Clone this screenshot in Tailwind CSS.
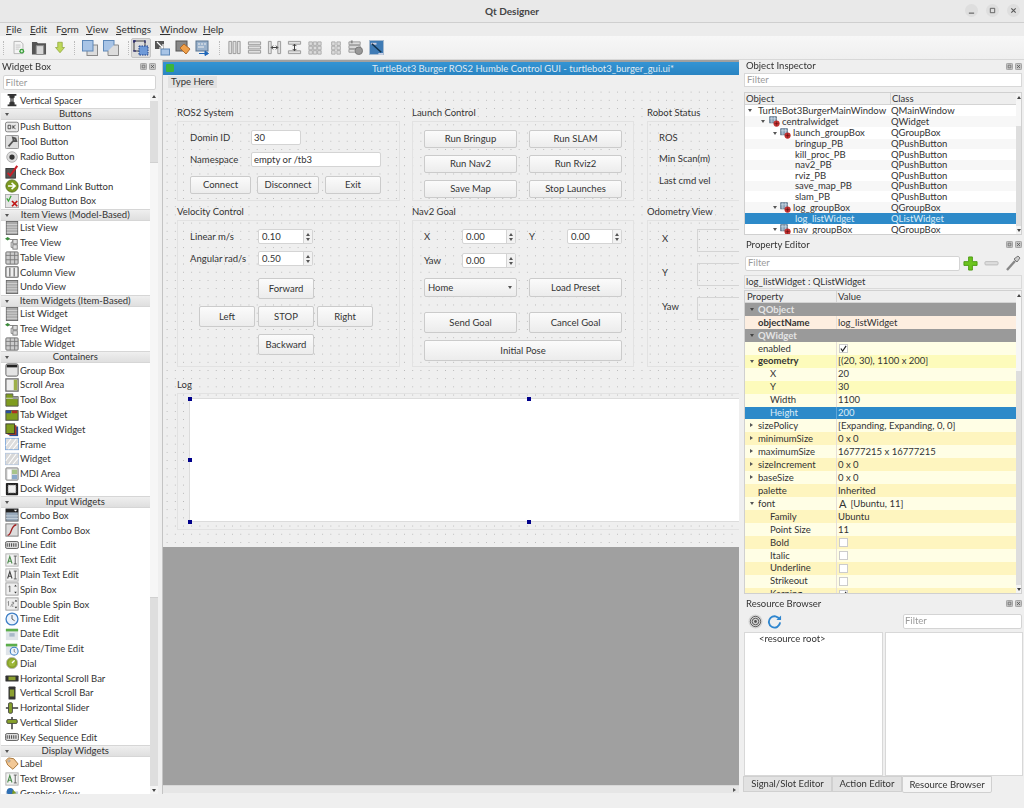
<!DOCTYPE html>
<html lang="en">
<head>
<meta charset="utf-8">
<title>Qt Designer</title>
<script src="https://cdn.jsdelivr.net/npm/@tailwindcss/browser@4"></script>
</head>
<body class="w-[1024px] h-[808px] overflow-hidden bg-[#efefef] font-['Lato','Noto_Sans',sans-serif] text-[9.500px] leading-none text-[#333333] blur-[0.3px]">
<svg class="hidden" xmlns="http://www.w3.org/2000/svg">
<symbol id="d-float" viewBox="0 0 8 8"><rect x=".5" y=".5" width="7" height="7" rx="1" fill="#c4c4c4" stroke="#9a9a9a"/><path d="M2.500 2.500h3v3h-3z" fill="none" stroke="#666" stroke-width=".8"/></symbol>
<symbol id="d-close" viewBox="0 0 8 8"><rect x=".5" y=".5" width="7" height="7" rx="1" fill="#c4c4c4" stroke="#9a9a9a"/><path d="M2.300 2.300l3.400 3.400M5.700 2.300L2.300 5.700" stroke="#555" stroke-width=".9"/></symbol>
<symbol id="spacer" viewBox="0 0 16 16"><path d="M3 1h10v2H3zM3 13h10v2H3zM5 3h6v2.500H5zM5 10.500h6V13H5zM6 5.500h4v5H6z" fill="#333"/><path d="M6 7h4M6 9h4" stroke="#bbb"/></symbol>
<symbol id="push" viewBox="0 0 16 16"><rect x=".5" y="2.500" width="15" height="11" rx="2" fill="#e8e8e8" stroke="#777"/><path d="M3.500 6h3v4h-3zM9 6v4M12 6l-3 2 3 2" fill="none" stroke="#444"/></symbol>
<symbol id="tool" viewBox="0 0 16 16"><rect x=".5" y=".5" width="15" height="15" rx="1" fill="#ddd" stroke="#888"/><path d="M4 13l6-7M9 3l3 1 1 3-3 0z" stroke="#555" stroke-width="2" fill="#999"/></symbol>
<symbol id="radio" viewBox="0 0 16 16"><circle cx="8" cy="8" r="6" fill="#ddd" stroke="#aaa"/><circle cx="8" cy="8" r="3" fill="#333"/></symbol>
<symbol id="check" viewBox="0 0 16 16"><rect x="1" y="4" width="11" height="11" fill="#555" stroke="#333"/><path d="M3 9l3 3 8-11" fill="none" stroke="#c8202a" stroke-width="2.400"/></symbol>
<symbol id="cmd" viewBox="0 0 16 16"><circle cx="8" cy="8" r="7" fill="#7d9a20" stroke="#56701a"/><path d="M3.500 8h7M7.500 4.500l4 3.500-4 3.500" fill="none" stroke="#fff" stroke-width="1.800"/></symbol>
<symbol id="dialog" viewBox="0 0 16 16"><rect x=".5" y=".5" width="15" height="15" fill="#e4e4e4" stroke="#aaa"/><path d="M2 5l2 3 3-6" fill="none" stroke="#3aa63a" stroke-width="1.400"/><path d="M8 8l6 6M14 8l-6 6" stroke="#c01818" stroke-width="2"/></symbol>
<symbol id="list" viewBox="0 0 16 16"><rect x="1.500" y=".5" width="13" height="15" fill="#aaa" stroke="#666"/><path d="M2 4h12M2 7h12M2 10h12M2 13h12" stroke="#d4d4d4"/></symbol>
<symbol id="tree" viewBox="0 0 16 16"><path d="M0 3l3-2 3 2-3 2z" fill="#3b8a3a"/><path d="M5 4h4v3M9 7h-2v6h2" fill="none" stroke="#777"/><rect x="9" y="4" width="5" height="5" fill="#ddd" stroke="#777"/><rect x="9" y="10" width="5" height="5" fill="#ddd" stroke="#777"/></symbol>
<symbol id="table" viewBox="0 0 16 16"><rect x="1" y="1" width="14" height="14" rx="1" fill="#ccc" stroke="#666"/><path d="M1 5h14M1 10h14M6 1v14M11 1v14" stroke="#777"/></symbol>
<symbol id="column" viewBox="0 0 16 16"><rect x="1" y="2" width="14" height="12" rx="1" fill="#eee" stroke="#666" stroke-width="1.400"/><path d="M5.500 3v10M10.500 3v10" stroke="#777" stroke-width="1.500"/></symbol>
<symbol id="group" viewBox="0 0 16 16"><rect x="1" y="1" width="14" height="14" rx="2" fill="#e4e4e4" stroke="#555"/><path d="M2 2h12v3H2z" fill="#222"/></symbol>
<symbol id="scroll" viewBox="0 0 16 16"><rect x="1" y="1" width="14" height="14" fill="#eee" stroke="#666" stroke-width="1.400"/><rect x="10" y="2" width="4" height="12" fill="#9eb04a"/></symbol>
<symbol id="toolbox" viewBox="0 0 16 16"><path d="M1 1h8v3h6v11H1z" fill="#7f9c1f" stroke="#555"/><path d="M9 4h6v3H9z" fill="#999"/><path d="M1 6h8" stroke="#ddd"/></symbol>
<symbol id="tab" viewBox="0 0 16 16"><rect x="1" y="3" width="14" height="11" fill="#7f9c1f" stroke="#444"/><path d="M1 3h6v3H1z" fill="#2a4f9c"/><path d="M8 3h6v3H8z" fill="#b03020"/></symbol>
<symbol id="stacked" viewBox="0 0 16 16"><rect x="5" y="4" width="10" height="11" fill="#2a4f9c"/><rect x="3" y="2.500" width="10" height="11" fill="#b03a20"/><rect x="1" y="1" width="10" height="11" fill="#7f9c1f" stroke="#333"/></symbol>
<symbol id="frame" viewBox="0 0 16 16"><rect x=".5" y="1.500" width="15" height="13" fill="#ddd" stroke="#7fa8da"/><path d="M1 10l6-8M4 14l9-12M9 14l6-7" stroke="#fff" stroke-width="1.200"/></symbol>
<symbol id="widget" viewBox="0 0 16 16"><rect x=".5" y="1.500" width="15" height="13" fill="#d8d8d8" stroke="#b6c6dc"/><path d="M1 10l6-8M4 14l9-12M9 14l6-7" stroke="#fff" stroke-width="1.200"/></symbol>
<symbol id="mdi" viewBox="0 0 16 16"><rect x="1" y="1" width="14" height="14" rx="1" fill="#ddd" stroke="#777"/><rect x="8" y="3" width="6" height="5" fill="#a8c48a"/><rect x="8" y="9" width="6" height="5" fill="#8aa9ca"/><rect x="3" y="3" width="4" height="11" fill="#fff"/></symbol>
<symbol id="dock" viewBox="0 0 16 16"><rect x="1" y="1" width="14" height="14" rx="1" fill="#222"/><rect x="3.500" y="3.500" width="9" height="9" fill="#eee" stroke="#888" stroke-dasharray="1 1"/></symbol>
<symbol id="combo" viewBox="0 0 16 16"><rect x="1" y="1" width="14" height="14" fill="#9ab" stroke="#666"/><path d="M1 1h14v4H1z" fill="#222"/><path d="M10 2h4l-2 2z" fill="#fff"/><path d="M1 9h14M1 12h14" stroke="#c8d2dc"/></symbol>
<symbol id="font" viewBox="0 0 16 16"><rect x="1" y="1" width="14" height="14" fill="#ddd" stroke="#777"/><path d="M3 14c5 0 3-11 10-12" fill="none" stroke="#a02020" stroke-width="1.600"/></symbol>
<symbol id="line" viewBox="0 0 16 16"><rect x=".5" y="4" width="15" height="8" rx="2" fill="#ddd" stroke="#555"/><path d="M2.500 6v4M5 6v4M7.500 6v4M10 6v4M12.500 6v4" stroke="#333"/></symbol>
<symbol id="text" viewBox="0 0 16 16"><rect x="1" y="1" width="14" height="14" fill="#f2f2f2" stroke="#aaa"/><path d="M3 12l2.500-8L8 12M4 9.500h3" fill="none" stroke="#4a8a4a" stroke-width="1.200"/><path d="M10 3.500h3.500M11.700 3.500v9M10 12.500h3.500" stroke="#555"/></symbol>
<symbol id="plain" viewBox="0 0 16 16"><rect x="1" y="1" width="14" height="14" fill="#f2f2f2" stroke="#aaa"/><path d="M3 12l2.500-8L8 12M4 9.500h3" fill="none" stroke="#444" stroke-width="1.200"/><path d="M10 3.500h3.500M11.700 3.500v9M10 12.500h3.500" stroke="#555"/></symbol>
<symbol id="spin" viewBox="0 0 16 16"><rect x="1" y="1" width="14" height="14" fill="#eee" stroke="#999"/><path d="M4 5.500l1.500-1v7" fill="none" stroke="#555"/><path d="M10.500 5l1.500-2 1.500 2zM10.500 11l1.500 2 1.500-2z" fill="#333"/></symbol>
<symbol id="dspin" viewBox="0 0 16 16"><rect x="1" y="1" width="14" height="14" fill="#eee" stroke="#999"/><path d="M3 6l1-1v5M6 10.500h.8M7.800 6h2v2h-2v2.500h2" fill="none" stroke="#666" stroke-width=".8"/><path d="M11 5l1.500-2 1.500 2zM11 11l1.500 2 1.500-2z" fill="#333"/></symbol>
<symbol id="time" viewBox="0 0 16 16"><circle cx="8" cy="8" r="6.800" fill="#eaf2fb" stroke="#3e7fc6" stroke-width="1.500"/><path d="M8 3.500V8l3 2" fill="none" stroke="#555" stroke-width="1.100"/></symbol>
<symbol id="date" viewBox="0 0 16 16"><rect x="1" y="2" width="14" height="13" fill="#dfe4e8"/><path d="M1 2h14v3H1z" fill="#5cae4a"/><rect x="5" y="7" width="6" height="4" fill="#a8b8c8"/></symbol>
<symbol id="datetime" viewBox="0 0 16 16"><rect x="1" y="2" width="13" height="13" fill="#dfe4e8"/><path d="M1 2h13v3H1z" fill="#5cae4a"/><circle cx="10.500" cy="10.500" r="4.500" fill="#eaf2fb" stroke="#3e7fc6" stroke-width="1.200"/><path d="M10.500 8v3l1.500 1" fill="none" stroke="#555" stroke-width=".8"/></symbol>
<symbol id="dial" viewBox="0 0 16 16"><circle cx="8" cy="8" r="6.500" fill="#87a12a" stroke="#bbb"/><circle cx="8" cy="8" r="4" fill="#9eb83a"/><path d="M8 8l3-3" stroke="#fff" stroke-width="1.600"/></symbol>
<symbol id="hsb" viewBox="0 0 16 16"><rect x=".5" y="5" width="15" height="7" rx="1" fill="#333"/><rect x="4" y="6.500" width="8" height="4" fill="#8ca030"/></symbol>
<symbol id="vsb" viewBox="0 0 16 16"><rect x="4" y=".5" width="8" height="15" rx="1" fill="#333"/><rect x="5.500" y="4" width="5" height="8" fill="#8ca030"/></symbol>
<symbol id="hs" viewBox="0 0 16 16"><path d="M1 8h14" stroke="#555" stroke-width="2"/><rect x="4" y="2" width="4.500" height="12" rx="1.500" fill="#86a02a" stroke="#444"/></symbol>
<symbol id="vs" viewBox="0 0 16 16"><path d="M8 1v14" stroke="#555" stroke-width="2"/><rect x="2" y="4" width="12" height="4.500" rx="1.500" fill="#86a02a" stroke="#444"/></symbol>
<symbol id="label" viewBox="0 0 16 16"><path d="M1 4l3-3 6 1 5 6-6 6-6-5z" fill="#f2c896" stroke="#a06a2a"/><circle cx="4.500" cy="4.500" r="1.200" fill="#fff" stroke="#555" stroke-width=".6"/></symbol>
<symbol id="gfx" viewBox="0 0 16 16"><rect x="1" y="5" width="14" height="10" fill="#b8c8dc"/><circle cx="6" cy="5" r="4" fill="#2f6fb3"/><path d="M9 3l4 4-5 1z" fill="#7f9c1f"/></symbol>
<symbol id="obj" viewBox="0 0 16 16"><rect x="1" y="1" width="10" height="9" fill="#8aa3b8" stroke="#52697d"/><path d="M1 4h10M4 1v9M8 1v9" stroke="#d8e2ea" stroke-width=".8"/><circle cx="11" cy="11" r="4.500" fill="#c03030"/><path d="M8 11h6M11 8v6" stroke="#5a1010" stroke-width=".8"/></symbol>
<symbol id="t-new" viewBox="0 0 16 16"><path d="M2.500 .5h8l3 3v12h-11z" fill="#f4f4f4" stroke="#aaa"/><path d="M4.500 5h6M4.500 7.500h6M4.500 10h4" stroke="#bbb"/><circle cx="12" cy="12.500" r="3" fill="#3aa03a"/><path d="M10.500 12.500h3M12 11v3" stroke="#fff"/></symbol>
<symbol id="t-open" viewBox="0 0 16 16"><path d="M.5 2h5l1.500 1.500h8.500v12H.5z" fill="#555"/><path d="M5 6h8v9.500H5z" fill="#d8d8d8" stroke="#888"/></symbol>
<symbol id="t-save" viewBox="0 0 16 16"><path d="M5 1h6v7h3l-6 7-6-7h3z" fill="#bfd85a" stroke="#8ea63a"/></symbol>
<symbol id="t-fwd" viewBox="0 0 16 16"><rect x="5" y="5" width="10.500" height="10.500" fill="#dcdcdc" stroke="#8a8a8a"/><rect x=".5" y=".5" width="10.500" height="10.500" fill="#a8c4e6" stroke="#5e88b8"/></symbol>
<symbol id="t-back" viewBox="0 0 16 16"><rect x=".5" y=".5" width="10.500" height="10.500" fill="#a8c4e6" stroke="#5e88b8"/><path d="M11 5h4.500v10.500H5V11" fill="#dcdcdc" stroke="#8a8a8a"/></symbol>
<symbol id="t-edit" viewBox="0 0 16 16"><path d="M1 1h11v10H1z" fill="#ddd" stroke="#444"/><rect x="6" y="6" width="9" height="9" fill="#6f9ad8" stroke="#1f3f88" stroke-dasharray="1.500 1"/><path d="M1 0v3M0 1h3M12 0v3M0 11h3" stroke="#1a1a6a"/></symbol>
<symbol id="t-sig" viewBox="0 0 16 16"><rect x="1" y="1" width="9" height="8" fill="#555"/><rect x="7" y="9" width="8.500" height="6" fill="#a8c4e6" stroke="#5e88b8"/><path d="M3 2l6 6M9 4v4H5" stroke="#fff" fill="none" stroke-width="1.200"/></symbol>
<symbol id="t-bud" viewBox="0 0 16 16"><rect x="1" y="1" width="11" height="10" fill="#888" stroke="#555"/><path d="M5 8l4-4 6 5-4 5z" fill="#efa04a" stroke="#b06a2a"/></symbol>
<symbol id="t-tab" viewBox="0 0 16 16"><rect x="1" y="1" width="12" height="10" fill="#9ab2cc" stroke="#5a7590"/><path d="M3 4h2M6 4h2M9 4h2M3 7h6" stroke="#f0f0f0"/><path d="M4 13.500h8M10 11l3.500 2.500L10 15.500z" stroke="#1f66b8" fill="#1f66b8"/></symbol>
<symbol id="l-h" viewBox="0 0 16 16"><path d="M2 1.500h3v13H2zM6.500 1.500h3v13h-3zM11 1.500h3v13h-3z" fill="#e0e0e0" stroke="#999"/></symbol>
<symbol id="l-v" viewBox="0 0 16 16"><path d="M1.500 2h13v3h-13zM1.500 6.500h13v3h-13zM1.500 11h13v3h-13z" fill="#e0e0e0" stroke="#999"/></symbol>
<symbol id="l-sh" viewBox="0 0 16 16"><path d="M1.500 1.500h3v13h-3zM11.500 1.500h3v13h-3z" fill="#e0e0e0" stroke="#999"/><path d="M5 8h6M6.500 6l-2 2 2 2M9.500 6l2 2-2 2" fill="none" stroke="#333"/></symbol>
<symbol id="l-sv" viewBox="0 0 16 16"><path d="M1.500 1.500h13v3h-13zM1.500 11.500h13v3h-13z" fill="#e0e0e0" stroke="#999"/><path d="M8 5v6M6 6.500l2-2 2 2M6 9.500l2 2 2-2" fill="none" stroke="#333"/></symbol>
<symbol id="l-g" viewBox="0 0 16 16"><path d="M1 1h4v4H1zM6 1h4v4H6zM11 1h4v4h-4zM1 6h4v4H1zM6 6h4v4H6zM11 6h4v4h-4zM1 11h4v4H1zM6 11h4v4H6zM11 11h4v4h-4z" fill="#dcdcdc" stroke="#a8a8a8"/></symbol>
<symbol id="l-f" viewBox="0 0 16 16"><path d="M3 1h4v4H3zM9 1h4v4H9zM3 6h4v4H3zM9 6h4v4H9zM3 11h4v4H3zM9 11h4v4H9z" fill="#dcdcdc" stroke="#a8a8a8"/></symbol>
<symbol id="l-b" viewBox="0 0 16 16"><path d="M1 2h12v3H1zM1 6h12v3H1zM1 10h12v3H1z" fill="#ddd" stroke="#999"/><path d="M4 .5v3" stroke="#888" stroke-width="2"/><circle cx="11.500" cy="11.500" r="4" fill="#999" stroke="#777"/></symbol>
<symbol id="l-a" viewBox="0 0 16 16"><rect x=".5" y=".5" width="15" height="15" fill="#3f7bb5" stroke="#a8bcd0"/><path d="M2 3h6v2H2z" fill="#ccd"/><path d="M3 4l10 9" stroke="#10304a" stroke-width="1.600"/><path d="M10 14h5v1.500h-5z" fill="#dde"/></symbol>
</svg>

<!-- title bar -->
<header class="relative h-[23px] flex items-center justify-center bg-[#e9e9e9] border-b border-[#cfcfcf]">
  <span class="font-bold text-[10px] text-[#444]">Qt Designer</span>
  <div class="absolute right-[4px] top-[4px] flex gap-[8px]">
    <span class="w-[13px] h-[13px] rounded-full bg-[#dedede] flex items-center justify-center"><svg class="w-[7px] h-[7px]" viewBox="0 0 8 8"><path d="M1 7h6" stroke="#555" stroke-width="1.200"/></svg></span>
    <span class="w-[13px] h-[13px] rounded-full bg-[#dedede] flex items-center justify-center"><svg class="w-[7px] h-[7px]" viewBox="0 0 8 8"><path d="M1.500 1.500h5v5h-5z" fill="none" stroke="#555"/></svg></span>
    <span class="w-[13px] h-[13px] rounded-full bg-[#dedede] flex items-center justify-center"><svg class="w-[7px] h-[7px]" viewBox="0 0 8 8"><path d="M1.500 1.500l5 5M6.500 1.500l-5 5" stroke="#555" stroke-width="1.200"/></svg></span>
  </div>
</header>

<!-- menu -->
<nav class="h-[13px] flex items-center bg-[#ececec] pl-[6px] pb-[1px] text-[10px]">
  <span class="w-[24px]"><u>F</u>ile</span>
  <span class="w-[26px]"><u>E</u>dit</span>
  <span class="w-[30px]">F<u>o</u>rm</span>
  <span class="w-[30px]"><u>V</u>iew</span>
  <span class="w-[44px]"><u>S</u>ettings</span>
  <span class="w-[43px]"><u>W</u>indow</span>
  <span><u>H</u>elp</span>
</nav>

<!-- toolbar -->
<div class="h-[24px] flex items-center bg-linear-to-b from-[#f7f7f7] to-[#efefef] border-b border-[#d8d8d8] pl-[3px]">
  <span class="w-[2px] h-[14px] border-l border-dotted border-[#bbb] mr-[7px]"></span>
  <svg class="w-[13px] h-[15px] mr-[6px]"><use href="#t-new"/></svg>
  <svg class="w-[16px] h-[15px] mr-[7px]"><use href="#t-open"/></svg>
  <svg class="w-[12px] h-[15px] mr-[8px]"><use href="#t-save"/></svg>
  <span class="w-[2px] h-[14px] border-l border-dotted border-[#bbb] mr-[6px]"></span>
  <svg class="w-[16px] h-[16px] mr-[5px]"><use href="#t-fwd"/></svg>
  <svg class="w-[16px] h-[16px] mr-[9px]"><use href="#t-back"/></svg>
  <span class="w-[2px] h-[14px] border-l border-dotted border-[#bbb] mr-[1px]"></span>
  <span class="w-[20px] h-[20px] flex items-center justify-center rounded-[2px] bg-[#dcdcdc] border border-[#c4c4c4] mr-[3px]"><svg class="w-[16px] h-[16px]"><use href="#t-edit"/></svg></span>
  <svg class="w-[16px] h-[16px] mr-[5px]"><use href="#t-sig"/></svg>
  <svg class="w-[16px] h-[16px] mr-[4px]"><use href="#t-bud"/></svg>
  <svg class="w-[16px] h-[16px] mr-[8px]"><use href="#t-tab"/></svg>
  <span class="w-[2px] h-[14px] border-l border-dotted border-[#bbb] mr-[6px]"></span>
  <svg class="w-[15px] h-[15px] mr-[5px]"><use href="#l-h"/></svg>
  <svg class="w-[15px] h-[15px] mr-[5px]"><use href="#l-v"/></svg>
  <svg class="w-[15px] h-[15px] mr-[5px]"><use href="#l-sh"/></svg>
  <svg class="w-[15px] h-[15px] mr-[6px]"><use href="#l-sv"/></svg>
  <svg class="w-[14px] h-[14px] mr-[7px]"><use href="#l-g"/></svg>
  <svg class="w-[14px] h-[14px] mr-[5px]"><use href="#l-f"/></svg>
  <svg class="w-[15px] h-[15px] mr-[6px]"><use href="#l-b"/></svg>
  <svg class="w-[15px] h-[15px]"><use href="#l-a"/></svg>
</div>

<main class="h-[734px] flex">
  <!-- Widget box -->
  <aside class="w-[158px] shrink-0 flex flex-col">
    <div class="h-[14px] flex items-center justify-between pl-[2px] pr-[2px] pb-[1px]">
      <span>Widget Box</span>
      <span class="flex gap-[2px]"><svg class="w-[7px] h-[7px]"><use href="#d-float"/></svg><svg class="w-[7px] h-[7px]"><use href="#d-close"/></svg></span>
    </div>
    <div class="h-[15px] mt-[1px] mx-[2.500px] w-[153px] bg-white border border-[#d4d4d4] rounded-[2px] flex items-center pl-[2px] text-[#9a9a9a]">Filter</div>
    <div class="mt-[3px] flex h-[702px] overflow-hidden">
      <div class="w-[149.500px] ml-[.5px] bg-white overflow-hidden">
        <div class="h-[14.800px] flex items-center gap-[1.500px] pl-[4px]"><svg class="w-[14px] h-[14px]"><use href="#spacer"/></svg><span>Vertical Spacer</span></div>
        <div class="relative h-[12px] flex items-center justify-center bg-linear-to-b from-[#efefef] to-[#dfdfdf] border-y border-[#d6d6d6]"><span class="absolute left-[4px] top-[4px] w-0 h-0 border-x-[2.500px] border-x-transparent border-t-[3px] border-t-[#555]"></span>Buttons</div>
        <div class="h-[14.800px] flex items-center gap-[1.500px] pl-[4px]"><svg class="w-[14px] h-[14px]"><use href="#push"/></svg><span>Push Button</span></div>
        <div class="h-[14.800px] flex items-center gap-[1.500px] pl-[4px]"><svg class="w-[14px] h-[14px]"><use href="#tool"/></svg><span>Tool Button</span></div>
        <div class="h-[14.800px] flex items-center gap-[1.500px] pl-[4px]"><svg class="w-[14px] h-[14px]"><use href="#radio"/></svg><span>Radio Button</span></div>
        <div class="h-[14.800px] flex items-center gap-[1.500px] pl-[4px]"><svg class="w-[14px] h-[14px]"><use href="#check"/></svg><span>Check Box</span></div>
        <div class="h-[14.800px] flex items-center gap-[1.500px] pl-[4px]"><svg class="w-[14px] h-[14px]"><use href="#cmd"/></svg><span>Command Link Button</span></div>
        <div class="h-[14.800px] flex items-center gap-[1.500px] pl-[4px]"><svg class="w-[14px] h-[14px]"><use href="#dialog"/></svg><span>Dialog Button Box</span></div>
        <div class="relative h-[12px] flex items-center justify-center bg-linear-to-b from-[#efefef] to-[#dfdfdf] border-y border-[#d6d6d6]"><span class="absolute left-[4px] top-[4px] w-0 h-0 border-x-[2.500px] border-x-transparent border-t-[3px] border-t-[#555]"></span>Item Views (Model-Based)</div>
        <div class="h-[14.800px] flex items-center gap-[1.500px] pl-[4px]"><svg class="w-[14px] h-[14px]"><use href="#list"/></svg><span>List View</span></div>
        <div class="h-[14.800px] flex items-center gap-[1.500px] pl-[4px]"><svg class="w-[14px] h-[14px]"><use href="#tree"/></svg><span>Tree View</span></div>
        <div class="h-[14.800px] flex items-center gap-[1.500px] pl-[4px]"><svg class="w-[14px] h-[14px]"><use href="#table"/></svg><span>Table View</span></div>
        <div class="h-[14.800px] flex items-center gap-[1.500px] pl-[4px]"><svg class="w-[14px] h-[14px]"><use href="#column"/></svg><span>Column View</span></div>
        <div class="h-[14.800px] flex items-center gap-[1.500px] pl-[4px]"><svg class="w-[14px] h-[14px]"><use href="#list"/></svg><span>Undo View</span></div>
        <div class="relative h-[12px] flex items-center justify-center bg-linear-to-b from-[#efefef] to-[#dfdfdf] border-y border-[#d6d6d6]"><span class="absolute left-[4px] top-[4px] w-0 h-0 border-x-[2.500px] border-x-transparent border-t-[3px] border-t-[#555]"></span>Item Widgets (Item-Based)</div>
        <div class="h-[14.800px] flex items-center gap-[1.500px] pl-[4px]"><svg class="w-[14px] h-[14px]"><use href="#list"/></svg><span>List Widget</span></div>
        <div class="h-[14.800px] flex items-center gap-[1.500px] pl-[4px]"><svg class="w-[14px] h-[14px]"><use href="#tree"/></svg><span>Tree Widget</span></div>
        <div class="h-[14.800px] flex items-center gap-[1.500px] pl-[4px]"><svg class="w-[14px] h-[14px]"><use href="#table"/></svg><span>Table Widget</span></div>
        <div class="relative h-[12px] flex items-center justify-center bg-linear-to-b from-[#efefef] to-[#dfdfdf] border-y border-[#d6d6d6]"><span class="absolute left-[4px] top-[4px] w-0 h-0 border-x-[2.500px] border-x-transparent border-t-[3px] border-t-[#555]"></span>Containers</div>
        <div class="h-[14.800px] flex items-center gap-[1.500px] pl-[4px]"><svg class="w-[14px] h-[14px]"><use href="#group"/></svg><span>Group Box</span></div>
        <div class="h-[14.800px] flex items-center gap-[1.500px] pl-[4px]"><svg class="w-[14px] h-[14px]"><use href="#scroll"/></svg><span>Scroll Area</span></div>
        <div class="h-[14.800px] flex items-center gap-[1.500px] pl-[4px]"><svg class="w-[14px] h-[14px]"><use href="#toolbox"/></svg><span>Tool Box</span></div>
        <div class="h-[14.800px] flex items-center gap-[1.500px] pl-[4px]"><svg class="w-[14px] h-[14px]"><use href="#tab"/></svg><span>Tab Widget</span></div>
        <div class="h-[14.800px] flex items-center gap-[1.500px] pl-[4px]"><svg class="w-[14px] h-[14px]"><use href="#stacked"/></svg><span>Stacked Widget</span></div>
        <div class="h-[14.800px] flex items-center gap-[1.500px] pl-[4px]"><svg class="w-[14px] h-[14px]"><use href="#frame"/></svg><span>Frame</span></div>
        <div class="h-[14.800px] flex items-center gap-[1.500px] pl-[4px]"><svg class="w-[14px] h-[14px]"><use href="#widget"/></svg><span>Widget</span></div>
        <div class="h-[14.800px] flex items-center gap-[1.500px] pl-[4px]"><svg class="w-[14px] h-[14px]"><use href="#mdi"/></svg><span>MDI Area</span></div>
        <div class="h-[14.800px] flex items-center gap-[1.500px] pl-[4px]"><svg class="w-[14px] h-[14px]"><use href="#dock"/></svg><span>Dock Widget</span></div>
        <div class="relative h-[12px] flex items-center justify-center bg-linear-to-b from-[#efefef] to-[#dfdfdf] border-y border-[#d6d6d6]"><span class="absolute left-[4px] top-[4px] w-0 h-0 border-x-[2.500px] border-x-transparent border-t-[3px] border-t-[#555]"></span>Input Widgets</div>
        <div class="h-[14.800px] flex items-center gap-[1.500px] pl-[4px]"><svg class="w-[14px] h-[14px]"><use href="#combo"/></svg><span>Combo Box</span></div>
        <div class="h-[14.800px] flex items-center gap-[1.500px] pl-[4px]"><svg class="w-[14px] h-[14px]"><use href="#font"/></svg><span>Font Combo Box</span></div>
        <div class="h-[14.800px] flex items-center gap-[1.500px] pl-[4px]"><svg class="w-[14px] h-[14px]"><use href="#line"/></svg><span>Line Edit</span></div>
        <div class="h-[14.800px] flex items-center gap-[1.500px] pl-[4px]"><svg class="w-[14px] h-[14px]"><use href="#text"/></svg><span>Text Edit</span></div>
        <div class="h-[14.800px] flex items-center gap-[1.500px] pl-[4px]"><svg class="w-[14px] h-[14px]"><use href="#plain"/></svg><span>Plain Text Edit</span></div>
        <div class="h-[14.800px] flex items-center gap-[1.500px] pl-[4px]"><svg class="w-[14px] h-[14px]"><use href="#spin"/></svg><span>Spin Box</span></div>
        <div class="h-[14.800px] flex items-center gap-[1.500px] pl-[4px]"><svg class="w-[14px] h-[14px]"><use href="#dspin"/></svg><span>Double Spin Box</span></div>
        <div class="h-[14.800px] flex items-center gap-[1.500px] pl-[4px]"><svg class="w-[14px] h-[14px]"><use href="#time"/></svg><span>Time Edit</span></div>
        <div class="h-[14.800px] flex items-center gap-[1.500px] pl-[4px]"><svg class="w-[14px] h-[14px]"><use href="#date"/></svg><span>Date Edit</span></div>
        <div class="h-[14.800px] flex items-center gap-[1.500px] pl-[4px]"><svg class="w-[14px] h-[14px]"><use href="#datetime"/></svg><span>Date/Time Edit</span></div>
        <div class="h-[14.800px] flex items-center gap-[1.500px] pl-[4px]"><svg class="w-[14px] h-[14px]"><use href="#dial"/></svg><span>Dial</span></div>
        <div class="h-[14.800px] flex items-center gap-[1.500px] pl-[4px]"><svg class="w-[14px] h-[14px]"><use href="#hsb"/></svg><span>Horizontal Scroll Bar</span></div>
        <div class="h-[14.800px] flex items-center gap-[1.500px] pl-[4px]"><svg class="w-[14px] h-[14px]"><use href="#vsb"/></svg><span>Vertical Scroll Bar</span></div>
        <div class="h-[14.800px] flex items-center gap-[1.500px] pl-[4px]"><svg class="w-[14px] h-[14px]"><use href="#hs"/></svg><span>Horizontal Slider</span></div>
        <div class="h-[14.800px] flex items-center gap-[1.500px] pl-[4px]"><svg class="w-[14px] h-[14px]"><use href="#vs"/></svg><span>Vertical Slider</span></div>
        <div class="h-[14.800px] flex items-center gap-[1.500px] pl-[4px]"><svg class="w-[14px] h-[14px]"><use href="#line"/></svg><span>Key Sequence Edit</span></div>
        <div class="relative h-[12px] flex items-center justify-center bg-linear-to-b from-[#efefef] to-[#dfdfdf] border-y border-[#d6d6d6]"><span class="absolute left-[4px] top-[4px] w-0 h-0 border-x-[2.500px] border-x-transparent border-t-[3px] border-t-[#555]"></span>Display Widgets</div>
        <div class="h-[14.800px] flex items-center gap-[1.500px] pl-[4px]"><svg class="w-[14px] h-[14px]"><use href="#label"/></svg><span>Label</span></div>
        <div class="h-[14.800px] flex items-center gap-[1.500px] pl-[4px]"><svg class="w-[14px] h-[14px]"><use href="#text"/></svg><span>Text Browser</span></div>
        <div class="h-[14.800px] flex items-center gap-[1.500px] pl-[4px]"><svg class="w-[14px] h-[14px]"><use href="#gfx"/></svg><span>Graphics View</span></div>
      </div>
      <div class="w-[8px] flex flex-col bg-[#dedede]">
        <div class="h-[8px] flex items-center justify-center bg-[#f4f4f4]"><span class="w-0 h-0 border-x-[2.500px] border-x-transparent border-b-[3px] border-b-[#444]"></span></div>
        <div class="h-[61px]"></div>
        <div class="h-[436px] bg-[#f6f6f6] border-y border-[#d0d0d0]"></div>
        <div class="flex-1"></div>
        <div class="h-[8px] flex items-center justify-center bg-[#f4f4f4]"><span class="w-0 h-0 border-x-[2.500px] border-x-transparent border-t-[3px] border-t-[#444]"></span></div>
      </div>
    </div>
  </aside>

  <!-- Centre MDI area -->
  <section class="w-[577px] ml-[4px] shrink-0 flex flex-col border-l border-[#c4c4c4] bg-[#efefef]">
    <div class="h-[725px] pt-[2px] bg-[#a0a0a0] overflow-hidden">
      <div class="h-[485px] w-[720px] bg-[#efefef] flex flex-col overflow-hidden">
        <div class="relative h-[13px] shrink-0 flex items-center justify-center bg-linear-to-b from-[#3494d4] to-[#2a84c2] text-[#dfe9f2]">
          <span class="absolute left-[3px] top-[2px] w-[8px] h-[8px] rounded-[1px] bg-[#3cb43c]"></span>
          <span>TurtleBot3 Burger ROS2 Humble Control GUI - turtlebot3_burger_gui.ui*</span>
        </div>
        <div class="h-[13px] shrink-0 flex items-center pl-[5px]"><span class="bg-[#e2e2e2] px-[3px] h-[12px] flex items-center">Type Here</span></div>
        <div class="flex-1 pl-[14px] bg-[radial-gradient(circle,#b4b4b4_0.5px,transparent_0.8px)] [background-size:8.2px_8.2px] overflow-hidden">
          <div class="w-[700px] grid grid-cols-[223px_222px_200px] gap-x-[12px]">
            <!-- Row 1 -->
            <div class="pt-[20px]">
              <div class="h-[13px]">ROS2 System</div>
              <div class="h-[80px] border border-[#e2e2e2] pl-[12px] pt-[8px] flex flex-col">
                <div class="h-[15px] flex items-center"><span class="w-[61px]">Domin ID</span><span class="w-[50px] h-[15px] flex items-center pl-[2px] bg-white border border-[#d4d4d4] rounded-[2px]">30</span></div>
                <div class="h-[15px] mt-[7px] flex items-center"><span class="w-[61px]">Namespace</span><span class="w-[130px] h-[15px] flex items-center pl-[2px] bg-white border border-[#d4d4d4] rounded-[2px]">empty or /tb3</span></div>
                <div class="h-[18px] mt-[9px] flex gap-[6px]">
                  <span class="w-[61px] flex items-center justify-center rounded-[2px] border border-[#cbcbcb] bg-linear-to-b from-[#fbfbfb] to-[#ececec]">Connect</span>
                  <span class="w-[62px] flex items-center justify-center rounded-[2px] border border-[#cbcbcb] bg-linear-to-b from-[#fbfbfb] to-[#ececec]">Disconnect</span>
                  <span class="w-[56px] flex items-center justify-center rounded-[2px] border border-[#cbcbcb] bg-linear-to-b from-[#fbfbfb] to-[#ececec]">Exit</span>
                </div>
              </div>
            </div>
            <div class="pt-[20px]">
              <div class="h-[13px]">Launch Control</div>
              <div class="h-[80px] border border-[#e2e2e2] pl-[11px] pt-[8px] grid grid-cols-[93px_93px] grid-rows-[18px_18px_18px] gap-x-[12px] gap-y-[7px]">
                <span class="flex items-center justify-center rounded-[2px] border border-[#cbcbcb] bg-linear-to-b from-[#fbfbfb] to-[#ececec]">Run Bringup</span>
                <span class="flex items-center justify-center rounded-[2px] border border-[#cbcbcb] bg-linear-to-b from-[#fbfbfb] to-[#ececec]">Run SLAM</span>
                <span class="flex items-center justify-center rounded-[2px] border border-[#cbcbcb] bg-linear-to-b from-[#fbfbfb] to-[#ececec]">Run Nav2</span>
                <span class="flex items-center justify-center rounded-[2px] border border-[#cbcbcb] bg-linear-to-b from-[#fbfbfb] to-[#ececec]">Run Rviz2</span>
                <span class="flex items-center justify-center rounded-[2px] border border-[#cbcbcb] bg-linear-to-b from-[#fbfbfb] to-[#ececec]">Save Map</span>
                <span class="flex items-center justify-center rounded-[2px] border border-[#cbcbcb] bg-linear-to-b from-[#fbfbfb] to-[#ececec]">Stop Launches</span>
              </div>
            </div>
            <div class="pt-[20px]">
              <div class="h-[13px] ml-[1px]">Robot Status</div>
              <div class="h-[80px] ml-[1px] border border-[#e2e2e2] pl-[11px] pt-[10px] flex flex-col gap-[10.500px]">
                <span class="h-[11px] flex items-center">ROS</span>
                <span class="h-[11px] flex items-center">Min Scan(m)</span>
                <span class="h-[11px] flex items-center">Last cmd vel</span>
              </div>
            </div>
            <!-- Row 2 -->
            <div class="pt-[6px]">
              <div class="h-[13px]">Velocity Control</div>
              <div class="h-[147px] border border-[#e2e2e2] pl-[12px] pt-[8px]">
                <div class="h-[15px] flex items-center"><span class="w-[68px]">Linear m/s</span><span class="w-[55px] h-[15px] flex items-center justify-between pl-[3px] bg-white border border-[#d4d4d4] rounded-[2px]">0.10<span class="w-[9px] h-full flex flex-col items-center justify-center gap-[2px] bg-[#f2f2f2] border-l border-[#d4d4d4]"><span class="w-0 h-0 border-x-[2.500px] border-x-transparent border-b-[3px] border-b-[#555]"></span><span class="w-0 h-0 border-x-[2.500px] border-x-transparent border-t-[3px] border-t-[#555]"></span></span></span></div>
                <div class="h-[15px] mt-[7px] flex items-center"><span class="w-[68px]">Angular rad/s</span><span class="w-[55px] h-[15px] flex items-center justify-between pl-[3px] bg-white border border-[#d4d4d4] rounded-[2px]">0.50<span class="w-[9px] h-full flex flex-col items-center justify-center gap-[2px] bg-[#f2f2f2] border-l border-[#d4d4d4]"><span class="w-0 h-0 border-x-[2.500px] border-x-transparent border-b-[3px] border-b-[#555]"></span><span class="w-0 h-0 border-x-[2.500px] border-x-transparent border-t-[3px] border-t-[#555]"></span></span></span></div>
                <div class="mt-[12px] ml-[9px] grid grid-cols-[56px_56px_56px] grid-rows-[21px_21px_21px] gap-x-[3px] gap-y-[7px]">
                  <span class="col-start-2 flex items-center justify-center rounded-[2px] border border-[#cbcbcb] bg-linear-to-b from-[#fbfbfb] to-[#ececec]">Forward</span>
                  <span class="col-start-1 flex items-center justify-center rounded-[2px] border border-[#cbcbcb] bg-linear-to-b from-[#fbfbfb] to-[#ececec]">Left</span>
                  <span class="flex items-center justify-center rounded-[2px] border border-[#cbcbcb] bg-linear-to-b from-[#fbfbfb] to-[#ececec]">STOP</span>
                  <span class="flex items-center justify-center rounded-[2px] border border-[#cbcbcb] bg-linear-to-b from-[#fbfbfb] to-[#ececec]">Right</span>
                  <span class="col-start-2 flex items-center justify-center rounded-[2px] border border-[#cbcbcb] bg-linear-to-b from-[#fbfbfb] to-[#ececec]">Backward</span>
                </div>
              </div>
            </div>
            <div class="pt-[6px]">
              <div class="h-[13px]">Nav2 Goal</div>
              <div class="h-[147px] border border-[#e2e2e2] pl-[11px] pt-[8px]">
                <div class="h-[15px] flex items-center">
                  <span class="w-[38px]">X</span><span class="w-[54px] h-[15px] flex items-center justify-between pl-[3px] bg-white border border-[#d4d4d4] rounded-[2px]">0.00<span class="w-[9px] h-full flex flex-col items-center justify-center gap-[2px] bg-[#f2f2f2] border-l border-[#d4d4d4]"><span class="w-0 h-0 border-x-[2.500px] border-x-transparent border-b-[3px] border-b-[#555]"></span><span class="w-0 h-0 border-x-[2.500px] border-x-transparent border-t-[3px] border-t-[#555]"></span></span></span>
                  <span class="w-[38px] ml-[13px]">Y</span><span class="w-[55px] h-[15px] flex items-center justify-between pl-[3px] bg-white border border-[#d4d4d4] rounded-[2px]">0.00<span class="w-[9px] h-full flex flex-col items-center justify-center gap-[2px] bg-[#f2f2f2] border-l border-[#d4d4d4]"><span class="w-0 h-0 border-x-[2.500px] border-x-transparent border-b-[3px] border-b-[#555]"></span><span class="w-0 h-0 border-x-[2.500px] border-x-transparent border-t-[3px] border-t-[#555]"></span></span></span>
                </div>
                <div class="h-[15px] mt-[9px] flex items-center"><span class="w-[38px]">Yaw</span><span class="w-[54px] h-[15px] flex items-center justify-between pl-[3px] bg-white border border-[#d4d4d4] rounded-[2px]">0.00<span class="w-[9px] h-full flex flex-col items-center justify-center gap-[2px] bg-[#f2f2f2] border-l border-[#d4d4d4]"><span class="w-0 h-0 border-x-[2.500px] border-x-transparent border-b-[3px] border-b-[#555]"></span><span class="w-0 h-0 border-x-[2.500px] border-x-transparent border-t-[3px] border-t-[#555]"></span></span></span></div>
                <div class="h-[19px] mt-[10px] flex gap-[12px]">
                  <span class="w-[93px] flex items-center justify-between pl-[3px] pr-[4px] rounded-[2px] border border-[#cbcbcb] bg-linear-to-b from-[#fbfbfb] to-[#ececec]">Home<span class="w-0 h-0 border-x-[2.500px] border-x-transparent border-t-[3px] border-t-[#555]"></span></span>
                  <span class="w-[93px] flex items-center justify-center rounded-[2px] border border-[#cbcbcb] bg-linear-to-b from-[#fbfbfb] to-[#ececec]">Load Preset</span>
                </div>
                <div class="h-[21px] mt-[15px] flex gap-[12px]">
                  <span class="w-[93px] flex items-center justify-center rounded-[2px] border border-[#cbcbcb] bg-linear-to-b from-[#fbfbfb] to-[#ececec]">Send Goal</span>
                  <span class="w-[93px] flex items-center justify-center rounded-[2px] border border-[#cbcbcb] bg-linear-to-b from-[#fbfbfb] to-[#ececec]">Cancel Goal</span>
                </div>
                <div class="h-[21px] w-[198px] mt-[7px] flex items-center justify-center rounded-[2px] border border-[#cbcbcb] bg-linear-to-b from-[#fbfbfb] to-[#ececec]">Initial Pose</div>
              </div>
            </div>
            <div class="pt-[6px]">
              <div class="h-[13px] ml-[1px]">Odometry View</div>
              <div class="h-[147px] ml-[1px] border border-[#e2e2e2] pl-[14px] pt-[8px] flex flex-col gap-[11px]">
                <div class="flex items-center h-[23px]"><span class="w-[35px] pb-[4px]">X</span><span class="w-[100px] h-[23px] border border-[#d4d4d4] shrink-0"></span></div>
                <div class="flex items-center h-[23px]"><span class="w-[35px] pb-[4px]">Y</span><span class="w-[100px] h-[23px] border border-[#d4d4d4] shrink-0"></span></div>
                <div class="flex items-center h-[23px]"><span class="w-[35px] pb-[3px]">Yaw</span><span class="w-[100px] h-[23px] border border-[#d4d4d4] shrink-0"></span></div>
              </div>
            </div>
          </div>
          <!-- Log -->
          <div class="mt-[13px]">
            <div class="h-[13px]">Log</div>
            <div class="relative w-[700px] h-[137px] border border-[#e2e2e2] pl-[11px] pt-[4px]">
              <div class="w-[679px] h-[124px] bg-white border border-[#dcdcdc]"></div>
              <span class="absolute left-[10px] top-[2.500px] w-[4px] h-[4px] bg-[#00008b]"></span>
              <span class="absolute left-[349px] top-[2.500px] w-[4px] h-[4px] bg-[#00008b]"></span>
              <span class="absolute left-[10px] top-[64px] w-[4px] h-[4px] bg-[#00008b]"></span>
              <span class="absolute left-[10px] top-[125.500px] w-[4px] h-[4px] bg-[#00008b]"></span>
              <span class="absolute left-[349px] top-[125.500px] w-[4px] h-[4px] bg-[#00008b]"></span>
            </div>
          </div>
        </div>
      </div>
    </div>
    <div class="h-[8px] flex justify-end items-center bg-[#e6e6e6] pr-[3px] border-t border-[#d8d8d8]"><span class="w-0 h-0 border-y-[2.500px] border-y-transparent border-l-[3px] border-l-[#555]"></span></div>
  </section>

  <!-- Right docks -->
  <aside class="w-[281px] ml-[4px] shrink-0 flex flex-col">
    <!-- Object Inspector -->
    <div class="h-[13px] flex items-center justify-between pl-[3px] pr-[2px] pb-[1px]">
      <span>Object Inspector</span>
      <span class="flex gap-[2px]"><svg class="w-[7px] h-[7px]"><use href="#d-float"/></svg><svg class="w-[7px] h-[7px]"><use href="#d-close"/></svg></span>
    </div>
    <div class="h-[14px] ml-[1px] w-[278px] bg-white border border-[#d8d8d8] flex items-center pl-[2px] text-[#9a9a9a]">Filter</div>
    <div class="mt-[5px] ml-[1px] w-[278px] h-[143px] flex bg-white border border-[#d0d0d0] overflow-hidden">
      <div class="w-[271px]">
        <div class="h-[12px] grid grid-cols-[145px_1fr] items-center bg-[#eeeeee] border-b border-[#d4d4d4]"><span class="pl-[1px]">Object</span><span class="pl-[1px] h-full flex items-center border-l border-[#d4d4d4]">Class</span></div>
        <div class="h-[11px] grid grid-cols-[145px_1fr] items-center"><span class="flex items-center pl-[3px]"><span class="w-0 h-0 border-x-[2.500px] border-x-transparent border-t-[3px] border-t-[#555] mr-[6px]"></span>TurtleBot3BurgerMainWindow</span><span class="pl-[1px]">QMainWindow</span></div>
        <div class="h-[11.400px] grid grid-cols-[145px_1fr] items-center bg-[#f7f7f7]"><span class="flex items-center pl-[16px]"><span class="w-0 h-0 border-x-[2.500px] border-x-transparent border-t-[3px] border-t-[#555] mr-[4px]"></span><svg class="w-[11px] h-[11px] mr-[2px]"><use href="#obj"/></svg>centralwidget</span><span class="pl-[1px]">QWidget</span></div>
        <div class="h-[11.400px] grid grid-cols-[145px_1fr] items-center"><span class="flex items-center pl-[28px]"><span class="w-0 h-0 border-x-[2.500px] border-x-transparent border-t-[3px] border-t-[#555] mr-[3px]"></span><svg class="w-[11px] h-[11px] mr-[2px]"><use href="#obj"/></svg>launch_groupBox</span><span class="pl-[1px]">QGroupBox</span></div>
        <div class="h-[10.500px] grid grid-cols-[145px_1fr] items-center bg-[#f7f7f7]"><span class="pl-[50px]">bringup_PB</span><span class="pl-[1px]">QPushButton</span></div>
        <div class="h-[10.500px] grid grid-cols-[145px_1fr] items-center"><span class="pl-[50px]">kill_proc_PB</span><span class="pl-[1px]">QPushButton</span></div>
        <div class="h-[10.500px] grid grid-cols-[145px_1fr] items-center bg-[#f7f7f7]"><span class="pl-[50px]">nav2_PB</span><span class="pl-[1px]">QPushButton</span></div>
        <div class="h-[10.500px] grid grid-cols-[145px_1fr] items-center"><span class="pl-[50px]">rviz_PB</span><span class="pl-[1px]">QPushButton</span></div>
        <div class="h-[10.500px] grid grid-cols-[145px_1fr] items-center bg-[#f7f7f7]"><span class="pl-[50px]">save_map_PB</span><span class="pl-[1px]">QPushButton</span></div>
        <div class="h-[10.500px] grid grid-cols-[145px_1fr] items-center"><span class="pl-[50px]">slam_PB</span><span class="pl-[1px]">QPushButton</span></div>
        <div class="h-[11.400px] grid grid-cols-[145px_1fr] items-center bg-[#f7f7f7]"><span class="flex items-center pl-[28px]"><span class="w-0 h-0 border-x-[2.500px] border-x-transparent border-t-[3px] border-t-[#555] mr-[3px]"></span><svg class="w-[11px] h-[11px] mr-[2px]"><use href="#obj"/></svg>log_groupBox</span><span class="pl-[1px]">QGroupBox</span></div>
        <div class="h-[10.500px] grid grid-cols-[145px_1fr] items-center bg-[#2d8ac9] text-[#dcecf7]"><span class="pl-[50px]">log_listWidget</span><span class="pl-[1px]">QListWidget</span></div>
        <div class="h-[11.400px] grid grid-cols-[145px_1fr] items-center"><span class="flex items-center pl-[28px]"><span class="w-0 h-0 border-x-[2.500px] border-x-transparent border-t-[3px] border-t-[#555] mr-[3px]"></span><svg class="w-[11px] h-[11px] mr-[2px]"><use href="#obj"/></svg>nav_groupBox</span><span class="pl-[1px]">QGroupBox</span></div>
      </div>
      <div class="flex-1 flex flex-col bg-[#dedede]">
        <div class="h-[8px] flex items-center justify-center bg-[#f4f4f4]"><span class="w-0 h-0 border-x-[2.500px] border-x-transparent border-b-[3px] border-b-[#444]"></span></div>
        <div class="h-[25px] bg-[#f6f6f6]"></div>
        <div class="flex-1"></div>
        <div class="h-[8px] flex items-center justify-center bg-[#f4f4f4]"><span class="w-0 h-0 border-x-[2.500px] border-x-transparent border-t-[3px] border-t-[#444]"></span></div>
      </div>
    </div>

    <!-- Property Editor -->
    <div class="h-[14px] mt-[3px] flex items-center justify-between pl-[3px] pr-[2px] pb-[1px]">
      <span>Property Editor</span>
      <span class="flex gap-[2px]"><svg class="w-[7px] h-[7px]"><use href="#d-float"/></svg><svg class="w-[7px] h-[7px]"><use href="#d-close"/></svg></span>
    </div>
    <div class="h-[16px] mt-[3px] flex items-center">
      <span class="ml-[2px] w-[215px] h-[15px] bg-white border border-[#d4d4d4] rounded-[2px] flex items-center pl-[2px] text-[#9a9a9a]">Filter</span>
      <svg class="ml-[3px] w-[15px] h-[15px]" viewBox="0 0 16 16"><path d="M6 1h4v5h5v4h-5v5H6v-5H1V6h5z" fill="#6cc41e" stroke="#4c9a12"/></svg>
      <svg class="ml-[6px] w-[15px] h-[15px]" viewBox="0 0 16 16"><rect x="1" y="6" width="14" height="3.500" rx="1" fill="#ddd" stroke="#bbb"/></svg>
      <svg class="ml-[6px] w-[16px] h-[16px]" viewBox="0 0 16 16"><path d="M2 15L10 6" stroke="#888" stroke-width="2.400"/><path d="M9 4l4-3 2 2-3 4z" fill="#ccc" stroke="#777"/></svg>
    </div>
    <div class="h-[14px] mt-[4px] ml-[1px] w-[278px] flex items-center pl-[1px] bg-[#f0f0f0] border border-[#dadada]">log_listWidget : QListWidget</div>
    <div class="mt-[1px] ml-[1px] w-[278px] h-[304px] flex bg-white border border-[#d0d0d0] overflow-hidden">
      <div class="w-[271px]">
        <div class="h-[12px] grid grid-cols-[91px_1fr] items-center bg-[#eeeeee] border-b border-[#d4d4d4]"><span class="pl-[2px]">Property</span><span class="pl-[1px] h-full flex items-center border-l border-[#d4d4d4]">Value</span></div>
        <div class="relative h-[12.950px] flex items-center bg-[#9a9a9a] pl-[13px] font-bold text-[#e4e4e4]"><span class="absolute left-[5px] top-[5px] w-0 h-0 border-x-[2.500px] border-x-transparent border-t-[3px] border-t-[#444]"></span>QObject</div>
        <div class="h-[12.950px] grid grid-cols-[91px_1fr] items-center bg-[#fdeee0]"><span class="pl-[13px] font-bold">objectName</span><span class="pl-[1px] h-full flex items-center border-l border-[#e6e0d8]">log_listWidget</span></div>
        <div class="relative h-[12.950px] flex items-center bg-[#9a9a9a] pl-[13px] font-bold text-[#e4e4e4]"><span class="absolute left-[5px] top-[5px] w-0 h-0 border-x-[2.500px] border-x-transparent border-t-[3px] border-t-[#444]"></span>QWidget</div>
        <div class="h-[12.950px] grid grid-cols-[91px_1fr] items-center bg-[#fffee5]"><span class="pl-[13px]">enabled</span><span class="pl-[1px] h-full flex items-center border-l border-[#e6e0d8]"><span class="w-[9px] h-[9px] ml-[1px] bg-white border border-[#ccc] flex items-center justify-center"><svg class="w-[7px] h-[7px]" viewBox="0 0 8 8"><path d="M1 4l2 3 4-6" fill="none" stroke="#222" stroke-width="1.300"/></svg></span></span></div>
        <div class="relative h-[12.950px] grid grid-cols-[91px_1fr] items-center bg-[#fdfbbb]"><span class="absolute left-[5px] top-[5px] w-0 h-0 border-x-[2.500px] border-x-transparent border-t-[3px] border-t-[#555]"></span><span class="pl-[13px] font-bold">geometry</span><span class="pl-[1px] h-full flex items-center border-l border-[#e6e0d8]">[(20, 30), 1100 x 200]</span></div>
        <div class="h-[12.950px] grid grid-cols-[91px_1fr] items-center bg-[#fffee5]"><span class="pl-[25px]">X</span><span class="pl-[1px] h-full flex items-center border-l border-[#e6e0d8]">20</span></div>
        <div class="h-[12.950px] grid grid-cols-[91px_1fr] items-center bg-[#fdfbbb]"><span class="pl-[25px]">Y</span><span class="pl-[1px] h-full flex items-center border-l border-[#e6e0d8]">30</span></div>
        <div class="h-[12.950px] grid grid-cols-[91px_1fr] items-center bg-[#fffee5]"><span class="pl-[25px]">Width</span><span class="pl-[1px] h-full flex items-center border-l border-[#e6e0d8]">1100</span></div>
        <div class="h-[12.950px] grid grid-cols-[91px_1fr] items-center bg-[#2d8ac9] text-[#dcecf7]"><span class="pl-[25px]">Height</span><span class="pl-[1px] h-full flex items-center border-l border-[#5ea6d8]">200</span></div>
        <div class="relative h-[12.950px] grid grid-cols-[91px_1fr] items-center bg-[#fffee5]"><span class="absolute left-[5px] top-[4px] w-0 h-0 border-y-[2.500px] border-y-transparent border-l-[3px] border-l-[#555]"></span><span class="pl-[13px]">sizePolicy</span><span class="pl-[1px] h-full flex items-center border-l border-[#e6e0d8]">[Expanding, Expanding, 0, 0]</span></div>
        <div class="relative h-[12.950px] grid grid-cols-[91px_1fr] items-center bg-[#fef5bf]"><span class="absolute left-[5px] top-[4px] w-0 h-0 border-y-[2.500px] border-y-transparent border-l-[3px] border-l-[#555]"></span><span class="pl-[13px]">minimumSize</span><span class="pl-[1px] h-full flex items-center border-l border-[#e6e0d8]">0 x 0</span></div>
        <div class="relative h-[12.950px] grid grid-cols-[91px_1fr] items-center bg-[#fffee5]"><span class="absolute left-[5px] top-[4px] w-0 h-0 border-y-[2.500px] border-y-transparent border-l-[3px] border-l-[#555]"></span><span class="pl-[13px]">maximumSize</span><span class="pl-[1px] h-full flex items-center border-l border-[#e6e0d8]">16777215 x 16777215</span></div>
        <div class="relative h-[12.950px] grid grid-cols-[91px_1fr] items-center bg-[#fef5bf]"><span class="absolute left-[5px] top-[4px] w-0 h-0 border-y-[2.500px] border-y-transparent border-l-[3px] border-l-[#555]"></span><span class="pl-[13px]">sizeIncrement</span><span class="pl-[1px] h-full flex items-center border-l border-[#e6e0d8]">0 x 0</span></div>
        <div class="relative h-[12.950px] grid grid-cols-[91px_1fr] items-center bg-[#fffee5]"><span class="absolute left-[5px] top-[4px] w-0 h-0 border-y-[2.500px] border-y-transparent border-l-[3px] border-l-[#555]"></span><span class="pl-[13px]">baseSize</span><span class="pl-[1px] h-full flex items-center border-l border-[#e6e0d8]">0 x 0</span></div>
        <div class="h-[12.950px] grid grid-cols-[91px_1fr] items-center bg-[#fef5bf]"><span class="pl-[13px]">palette</span><span class="pl-[1px] h-full flex items-center border-l border-[#e6e0d8]">Inherited</span></div>
        <div class="relative h-[12.950px] grid grid-cols-[91px_1fr] items-center bg-[#fffee5]"><span class="absolute left-[5px] top-[5px] w-0 h-0 border-x-[2.500px] border-x-transparent border-t-[3px] border-t-[#555]"></span><span class="pl-[13px]">font</span><span class="pl-[1px] h-full flex items-center gap-[4px] border-l border-[#e6e0d8]"><span class="text-[11px] pl-[1px]">A</span>[Ubuntu, 11]</span></div>
        <div class="h-[12.950px] grid grid-cols-[91px_1fr] items-center bg-[#fef5bf]"><span class="pl-[25px]">Family</span><span class="pl-[1px] h-full flex items-center border-l border-[#e6e0d8]">Ubuntu</span></div>
        <div class="h-[12.950px] grid grid-cols-[91px_1fr] items-center bg-[#fffee5]"><span class="pl-[25px]">Point Size</span><span class="pl-[1px] h-full flex items-center border-l border-[#e6e0d8]">11</span></div>
        <div class="h-[12.950px] grid grid-cols-[91px_1fr] items-center bg-[#fef5bf]"><span class="pl-[25px]">Bold</span><span class="pl-[1px] h-full flex items-center border-l border-[#e6e0d8]"><span class="w-[9px] h-[9px] ml-[1px] bg-white border border-[#ccc]"></span></span></div>
        <div class="h-[12.950px] grid grid-cols-[91px_1fr] items-center bg-[#fffee5]"><span class="pl-[25px]">Italic</span><span class="pl-[1px] h-full flex items-center border-l border-[#e6e0d8]"><span class="w-[9px] h-[9px] ml-[1px] bg-white border border-[#ccc]"></span></span></div>
        <div class="h-[12.950px] grid grid-cols-[91px_1fr] items-center bg-[#fef5bf]"><span class="pl-[25px]">Underline</span><span class="pl-[1px] h-full flex items-center border-l border-[#e6e0d8]"><span class="w-[9px] h-[9px] ml-[1px] bg-white border border-[#ccc]"></span></span></div>
        <div class="h-[12.950px] grid grid-cols-[91px_1fr] items-center bg-[#fffee5]"><span class="pl-[25px]">Strikeout</span><span class="pl-[1px] h-full flex items-center border-l border-[#e6e0d8]"><span class="w-[9px] h-[9px] ml-[1px] bg-white border border-[#ccc]"></span></span></div>
        <div class="h-[12.950px] grid grid-cols-[91px_1fr] items-center bg-[#fef5bf]"><span class="pl-[25px]">Kerning</span><span class="pl-[1px] h-full flex items-center border-l border-[#e6e0d8]"><span class="w-[9px] h-[9px] ml-[1px] bg-white border border-[#ccc] flex items-center justify-center"><svg class="w-[7px] h-[7px]" viewBox="0 0 8 8"><path d="M1 4l2 3 4-6" fill="none" stroke="#222" stroke-width="1.300"/></svg></span></span></div>
      </div>
      <div class="flex-1 flex flex-col bg-[#dedede]">
        <div class="h-[8px] flex items-center justify-center bg-[#f4f4f4]"><span class="w-0 h-0 border-x-[2.500px] border-x-transparent border-b-[3px] border-b-[#444]"></span></div>
        <div class="h-[72px] bg-[#f6f6f6]"></div>
        <div class="flex-1"></div>
        <div class="h-[8px] flex items-center justify-center bg-[#f4f4f4]"><span class="w-0 h-0 border-x-[2.500px] border-x-transparent border-t-[3px] border-t-[#444]"></span></div>
      </div>
    </div>

    <!-- Resource Browser -->
    <div class="h-[14px] mt-[3px] flex items-center justify-between pl-[3px] pr-[2px] pb-[1px]">
      <span>Resource Browser</span>
      <span class="flex gap-[2px]"><svg class="w-[7px] h-[7px]"><use href="#d-float"/></svg><svg class="w-[7px] h-[7px]"><use href="#d-close"/></svg></span>
    </div>
    <div class="h-[16px] mt-[2px] flex items-center pl-[5px]">
      <svg class="w-[15px] h-[15px]" viewBox="0 0 16 16"><circle cx="8" cy="8" r="7.500" fill="#d4d4d4"/><circle cx="8" cy="8" r="5.500" fill="none" stroke="#555"/><circle cx="8" cy="8" r="3.500" fill="none" stroke="#555"/><circle cx="8" cy="8" r="1.500" fill="#555"/></svg>
      <svg class="ml-[4px] w-[15px] h-[15px]" viewBox="0 0 16 16"><path d="M13.500 6A6 6 0 1 0 14 9" fill="none" stroke="#2f86cf" stroke-width="2"/><path d="M10 6.500h5v-5z" fill="#2f86cf"/></svg>
      <span class="ml-[121px] w-[119px] h-[15px] bg-white border border-[#d4d4d4] rounded-[2px] flex items-center pl-[1px] text-[#9a9a9a]">Filter</span>
    </div>
    <div class="h-[144px] mt-[3px] flex">
      <div class="ml-[1px] w-[139px] bg-white border border-[#d8d8d8] pl-[14px] pt-[1px]">&lt;resource root&gt;</div>
      <div class="ml-[2px] w-[138px] bg-white border border-[#d8d8d8]"></div>
    </div>
    <div class="h-[16px] flex">
      <span class="w-[89px] h-[16px] flex items-center justify-center bg-[#e2e2e2] border border-[#d0d0d0]">Signal/Slot Editor</span>
      <span class="w-[70px] h-[16px] flex items-center justify-center bg-[#e2e2e2] border border-[#d0d0d0]">Action Editor</span>
      <span class="w-[90px] h-[17px] flex items-center justify-center bg-[#f4f4f4] border border-[#d0d0d0] rounded-b-[2px]">Resource Browser</span>
    </div>
  </aside>
</main>
</body>
</html>
